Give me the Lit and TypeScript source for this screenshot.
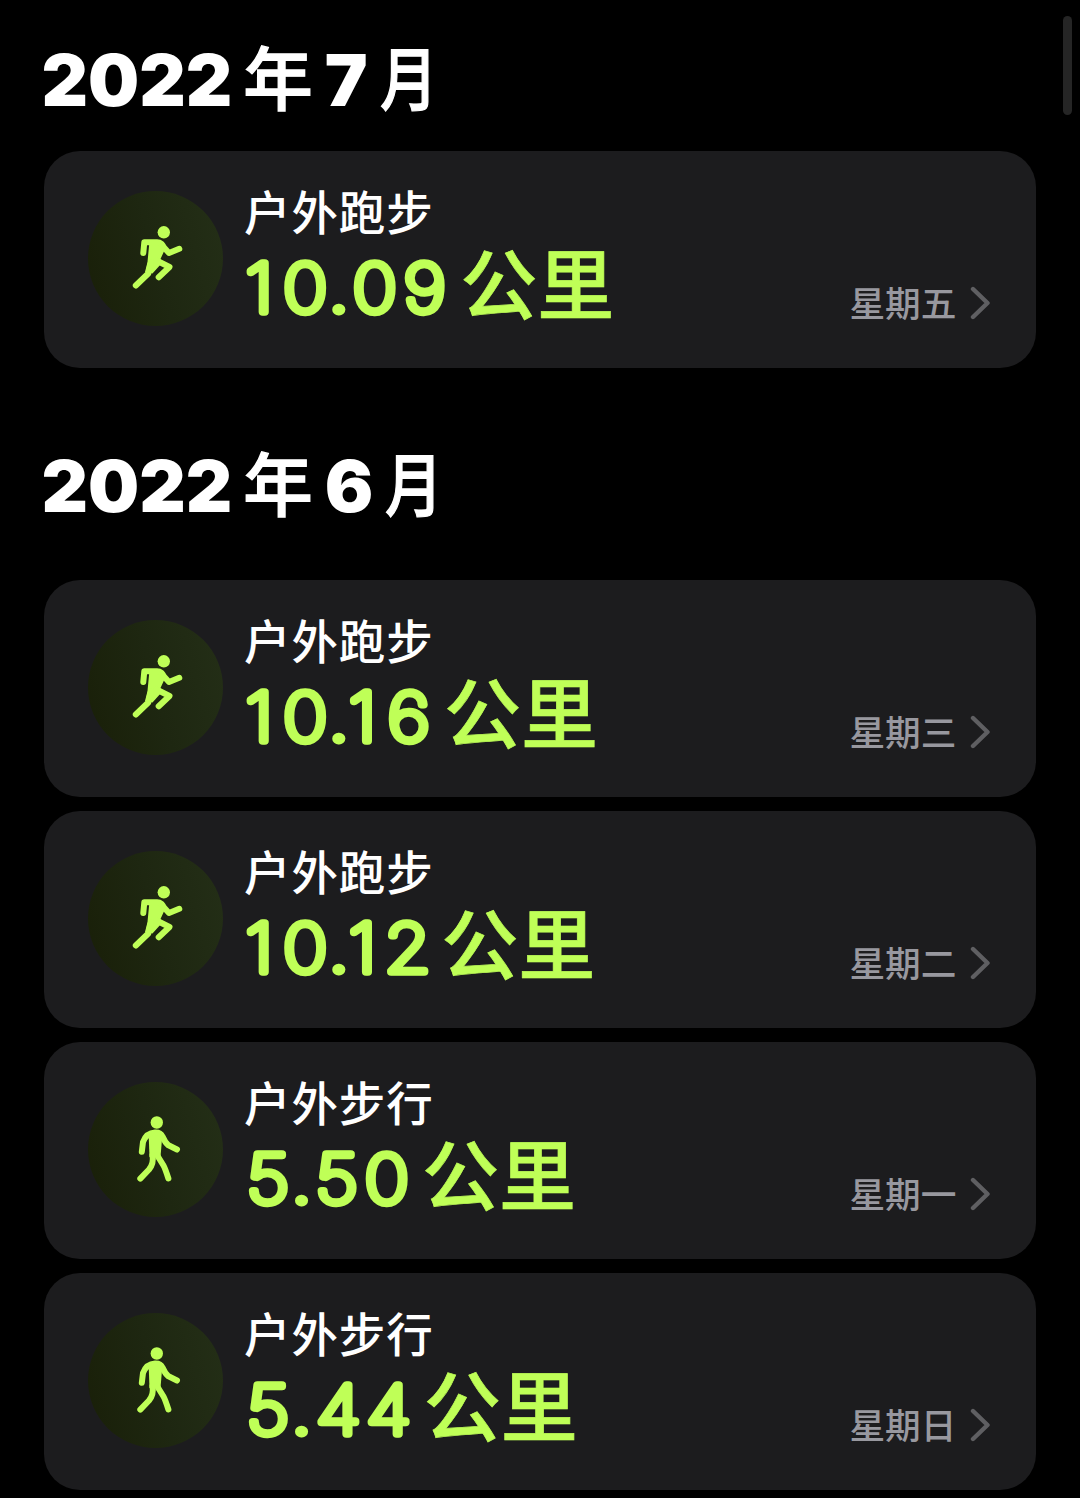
import { LitElement, html, css, svg } from "lit";
import { customElement, property } from "lit/decorators.js";

interface Workout {
  kind: "run" | "walk";
  title: string;
  value: string;
  day: string;
}

interface Month {
  year: string;
  month: string;
  loose: boolean;
  workouts: Workout[];
}

const MONTHS: Month[] = [
  {
    year: "2022",
    month: "7",
    loose: false,
    workouts: [{ kind: "run", title: "户外跑步", value: "10.09", day: "星期五" }],
  },
  {
    year: "2022",
    month: "6",
    loose: true,
    workouts: [
      { kind: "run", title: "户外跑步", value: "10.16", day: "星期三" },
      { kind: "run", title: "户外跑步", value: "10.12", day: "星期二" },
      { kind: "walk", title: "户外步行", value: "5.50", day: "星期一" },
      { kind: "walk", title: "户外步行", value: "5.44", day: "星期日" },
    ],
  },
];

/* Center offset and advance of each rounded numeral, in pixels. */
const METRICS: Record<string, [number, number]> = {
  "0": [25, 50],
  "1": [15.2, 36.2],
  "2": [24, 47.1],
  "4": [25.8, 50.3],
  "5": [24, 49],
  "6": [25, 49.8],
  "9": [25, 50],
  ".": [8.6, 19.6],
};
const DOT_ONE_KERN = -2.4;
/* Horizontal widening of the numerals. */
const STRETCH = 1.13;

@customElement("rounded-number")
export class RoundedNumber extends LitElement {
  static styles = css`
    :host { display: block; height: 76px; }
    svg { display: block; overflow: visible; }
    text {
      font-family: Inter, "Liberation Sans", sans-serif;
      font-size: 66.5px;
      font-weight: 100;
      fill: #bfff57;
      stroke: #bfff57;
      stroke-width: 7.4px;
      stroke-linejoin: round;
      stroke-linecap: round;
      text-anchor: middle;
    }
    .dot { font-weight: 400; stroke-width: 2.8px; }
  `;
  @property() value = "";

  render() {
    let pen = 0;
    const glyphs = [...this.value].map((char, i, all) => {
      const [center, advance] = METRICS[char];
      if (char === "1" && all[i - 1] === ".") pen += DOT_ONE_KERN;
      const x = (pen + center) / STRETCH;
      pen += advance;
      return svg`<tspan class=${char === "." ? "dot" : "digit"} x=${x} y=${char === "." ? 75.5 : 73.3}>${char}</tspan>`;
    });
    return html`<svg width=${pen} height="76" role="img">
      ${svg`<text transform="scale(${STRETCH} 1)">${glyphs}</text>`}
    </svg>`;
  }
}

const runner = svg`
  <circle class="solid" cx="83.800" cy="52.300" r="6.200"></circle>
  <path class="solid" d="M69.500 61H79L86 67L80.500 79L81 84L72.500 93.500L65 92L67.500 82Z"></path>
  <path class="limb" d="M63.300 73L64.300 62.300H77C81 62.300 82.300 64.500 84 67.500L89 73L99.300 68.800"></path>
  <path class="limb" d="M76.500 80.500L89.500 87L78.700 97.200"></path>
  <path class="limb" d="M71 82L68.300 93.500L55.800 105.500"></path>`;

const walker = svg`
  <circle class="solid" cx="76.800" cy="51.500" r="6.200"></circle>
  <path class="solid" d="M68.800 68L70 60.500H80L82 68L80.500 86H69.500Z"></path>
  <path class="limb" d="M61.800 80.800L63 71Q66.500 62 75 61.600Q80.500 61.300 82.500 65.500Q85 71.500 88.500 74.300L97 78.500"></path>
  <path class="limb" d="M72.500 84Q74 92.500 69 98.500L60.300 107.600"></path>
  <path class="limb" d="M77 84L83.500 94.500Q85 97 88.400 107.500"></path>`;

@customElement("workout-card")
export class WorkoutCard extends LitElement {
  static styles = css`
    :host {
      display: flex;
      box-sizing: border-box;
      height: 217px;
      padding: 40px 45px 0 44px;
      border-radius: 36px;
      background: #1c1c1e;
      font-family: Inter, "Noto Sans CJK SC", sans-serif;
    }
    .badge {
      flex: none;
      width: 135px;
      height: 135px;
      border-radius: 50%;
      background: linear-gradient(75deg, #191f08 0%, #1e2711 50%, #242f17 100%);
    }
    .badge svg { display: block; width: 135px; height: 135px; }
    .solid { fill: #bfff57; }
    .limb {
      fill: none;
      stroke: #bfff57;
      stroke-width: 6;
      stroke-linecap: round;
      stroke-linejoin: round;
    }
    .body { flex: 1; margin-left: 21px; }
    .title {
      height: 48px;
      line-height: 45px;
      font-size: 46.5px;
      letter-spacing: 0.9px;
      font-weight: 500;
      color: #fff;
      white-space: nowrap;
    }
    .distance { display: flex; height: 76px; }
    .unit {
      margin: 9px 0 0 10.500px;
      font-size: 77px;
      line-height: 76px;
      font-weight: 500;
      color: #bfff57;
      -webkit-text-stroke: 0.7px #bfff57;
      white-space: nowrap;
    }
    .day {
      display: flex;
      flex: none;
      align-items: center;
      align-self: flex-start;
      height: 50px;
      margin-top: 87px;
      font-size: 35.7px;
      font-weight: 500;
      color: #98989f;
    }
    .day span { margin-top: -4px; }
    .chevron { display: block; margin-left: 13.500px; }
    .chevron path {
      fill: none;
      stroke: #5f5f62;
      stroke-width: 4.4;
      stroke-linecap: round;
      stroke-linejoin: round;
    }
  `;
  @property({ attribute: false }) workout!: Workout;

  render() {
    const w = this.workout;
    return html`
      <div class="badge"><svg viewBox="0 0 135 135"><g transform="translate(-8 -11)">${w.kind === "run" ? runner : walker}</g></svg></div>
      <div class="body">
        <div class="title">${w.title}</div>
        <div class="distance">
          <rounded-number .value=${w.value}></rounded-number>
          <span class="unit">公里</span>
        </div>
      </div>
      <div class="day">
        <span>${w.day}</span>
        <svg class="chevron" width="21" height="34" viewBox="0 0 21 34"><path d="M3 3L17.500 17L3 31"></path></svg>
      </div>
    `;
  }
}

@customElement("app-root")
export class AppRoot extends LitElement {
  static styles = css`
    :host {
      display: block;
      position: relative;
      box-sizing: border-box;
      height: 1498px;
      padding: 31px 44px 0;
      overflow: hidden;
      background: #000;
    }
    .thumb {
      position: absolute;
      top: 16px;
      right: 8px;
      width: 9px;
      height: 99px;
      border-radius: 5px;
      background: #252525;
    }
    .month { margin-bottom: 69px; }
    .heading {
      display: flex;
      align-items: baseline;
      margin: 0;
      height: 90px;
      line-height: 90px;
      font-weight: 900;
      color: #fff;
      white-space: nowrap;
    }
    .num { font-family: Inter, "Liberation Sans", sans-serif; font-size: 72px; margin-left: -2.500px; }
    .cjk {
      font-family: "Noto Sans CJK SC", sans-serif;
      font-size: 69.5px;
      font-weight: 500;
      margin: 0 14.500px 0 11px;
      -webkit-text-stroke: 1.300px #fff;
      transform: translateY(-1.500px);
    }
    .moon { margin-left: 6px; transform: translateY(-1.500px) scaleX(0.83); }
    .list { display: grid; gap: 14px; margin-top: 30px; }
    .loose .list { margin-top: 53px; }
  `;

  render() {
    return html`
      ${MONTHS.map(
        (m) => html`<section class="month ${m.loose ? "loose" : ""}">
          <h2 class="heading">
            <span class="num">${m.year}</span><span class="cjk">年</span><span class="num">${m.month}</span><span class="cjk moon">月</span>
          </h2>
          <div class="list">${m.workouts.map((w) => html`<workout-card .workout=${w}></workout-card>`)}</div>
        </section>`
      )}
      <div class="thumb"></div>
    `;
  }
}
